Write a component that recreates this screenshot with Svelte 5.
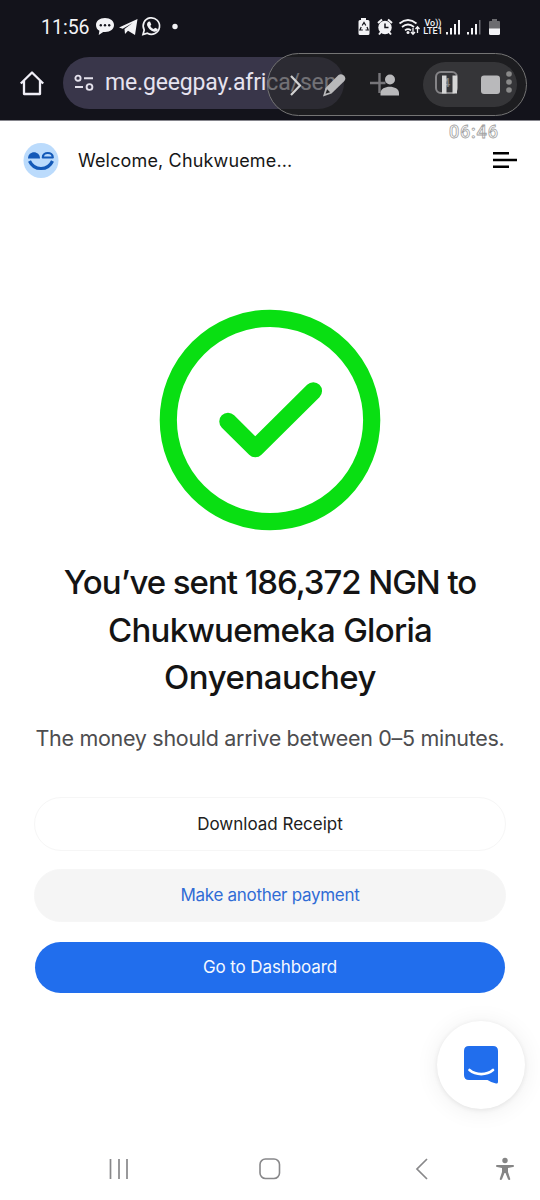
<script>
  let clock = '11:56';
  let url = 'me.geegpay.africa/sen';
  let tabs = 4;
  let recorded = '06:46';
  let userName = 'Chukwueme...';
  let titleLines = [
    { text: 'You’ve sent 186,372 NGN to', cls: 'first' },
    { text: 'Chukwuemeka Gloria', cls: 'second' },
    { text: 'Onyenauchey', cls: 'third' }
  ];
</script>

<div class="screen">
  <div class="status">
    <span class="clock">{clock}</span>
    <svg class="notifications" width="90" height="22" viewBox="0 0 90 22" fill="#f3f3f6">
      <path d="M10 2C4.500 2 1 5 1 9c0 2.600 1.200 4.500 3.400 5.800L3.700 19l4.500-3h2c5.300 0 8.800-3 8.800-7S15.500 2 10 2Z" />
      <g fill="#15151d"><circle cx="5.800" cy="9.300" r="1.200" /><circle cx="10" cy="9.300" r="1.200" /><circle cx="14.200" cy="9.300" r="1.200" /></g>
      <path d="M24 11.500 42.500 3 40 19l-7-4.200-3 3.100-.5-4.800L37.500 7l-9.800 5.800Z" />
      <path d="M48 18.500 49.200 14a8.200 8.200 0 1 1 3.200 3.200Z" fill="none" stroke="#f3f3f6" stroke-width="1.700" />
      <path d="M53.300 5.800 55 5.500l1.300 3-1 1.400c.8 1.500 1.900 2.500 3.500 3.200l1.300-1.400 2.700 1.400c-.2 2.200-1.900 3-3.800 2.600-3.500-.9-6.100-3.700-6.900-6.500-.2-1.400.2-2.500 1.200-3.400Z" />
      <circle cx="80" cy="10.500" r="2.700" />
    </svg>
    <div class="indicators">
      <svg width="70" height="24" viewBox="0 0 70 24" fill="#f3f3f6">
        <path d="M5 3h5v2h2q1.500 0 1.500 1.500v12Q13.500 20 12 20H4q-1.500 0-1.500-1.500v-12Q2.500 5 4 5h1Z" />
        <path d="m6.200 10.500 1.800-3 1.800 3M11 12l1.200 3H9.500M6.800 15H3.900l1.300-3" fill="none" stroke="#15151d" stroke-width="1.200" />
        <circle cx="29" cy="12.500" r="6.700" />
        <path d="m22 8 4-3.500M32 4.500 36 8M25 17l-2 2.500M33 17l2 2.500" stroke="#f3f3f6" stroke-width="2" />
        <path d="M29 8.500v4h3.500" fill="none" stroke="#15151d" stroke-width="1.500" />
        <g fill="none" stroke="#f3f3f6" stroke-width="1.700">
          <path d="M43.500 8.500q8.500-7 17 0M46 12q6-5 12 0M49 15.300q3-2.500 6 0" />
        </g>
        <circle cx="52" cy="17.500" r="1.500" />
        <path d="M57 13v6m-2-2 2 2.200 2-2.200M61.500 18v-6m-2 2 2-2.200 2 2.200" fill="none" stroke="#f3f3f6" stroke-width="1.300" />
      </svg>
      <span class="lte"><span>Vo))</span><span>LTE1</span></span>
      <svg width="56" height="20" viewBox="0 0 56 20" fill="#f3f3f6">
        <path d="M1 15h2v2.500H1ZM5 11h2v6.500H5ZM9 7h2v10.500H9ZM13 3h2v14.500h-2ZM22 15h2v2.500h-2ZM26 11h2v6.500h-2ZM30 7h2v10.500h-2Z" />
        <path d="M34 3h1.500v14.500H34Z" fill="#6b6b72" />
        <path d="M47 2h5v2h2q1 0 1 1v7H44V5q0-1 1-1h2Z" fill="#6c6c70" />
        <path d="M44 11.500h11v5q0 1.500-1.500 1.500h-8Q44 18 44 16.500Z" />
      </svg>
    </div>
  </div>

  <div class="browser">
    <svg class="home" width="26" height="26" viewBox="0 0 26 26" fill="none" stroke="#f0eef7" stroke-width="2.300" stroke-linejoin="round">
      <path d="m1.800 13.500 11.200-11 11.200 11M5 11v13h16V11" />
    </svg>
    <div class="url">
      <svg width="20" height="18" viewBox="0 0 20 18" fill="none" stroke="#e4e1ec" stroke-width="1.900">
        <circle cx="4" cy="4.200" r="2.600" /><path d="M10 4.200h9M1 13h8" /><circle cx="15.500" cy="13" r="2.900" />
      </svg>
      <span>{url}</span>
    </div>
    <svg class="plus" width="18" height="22" viewBox="0 0 18 22" stroke="#f0eef7" stroke-width="2.400"><path d="M1 11h15.500M10.500 1v20" /></svg>
    <span class="tabs">{tabs}</span>
    <svg class="dots" width="6" height="23" viewBox="0 0 6 23" fill="#fff"><circle cx="3" cy="3" r="2.800" /><circle cx="3" cy="11" r="2.800" /><circle cx="3" cy="19" r="2.800" /></svg>

    <div class="recorder">
      <svg class="tools" width="150" height="34" viewBox="0 0 150 34">
        <path d="m23 8 9 9.500-9 9.500" fill="none" stroke="#d3d3d3" stroke-width="2.200" />
        <path d="m55 28.500 2.500-8.500L70.500 7q2.500-2 5.300.6t.6 5.300L63.500 25.500Z" fill="#b9b9bb" />
        <path d="m57.500 25.800 1.600-4.600 3 3Z" fill="#242426" />
        <g fill="#b9b9bb"><circle cx="122" cy="11.500" r="5" /><path d="M112.500 27.500V25c0-8.500 18.500-8.500 18.500 0v2.500Z" /></g>
      </svg>
      <div class="controls">
        <svg width="94" height="44" viewBox="0 0 94 44">
          <path d="M19 13.500h4.500v18H19ZM29.500 13.500H34v18h-4.500Z" fill="#d6d6d6" />
          <rect x="58" y="13.500" width="19" height="18.500" rx="3" fill="#b9b9bb" />
        </svg>
      </div>
    </div>
    <span class="timer">{recorded}</span>
  </div>

  <header>
    <svg width="36" height="36" viewBox="0 0 36 36">
      <circle cx="18" cy="17.500" r="17.500" fill="#bbdbfc" />
      <path d="M5 15.500C5 7 17 7 17 15.500Z" fill="#1359b8" />
      <path d="M19.800 14.500c0-6 10-6 10 0Z" fill="none" stroke="#1359b8" stroke-width="2.200" stroke-linejoin="round" />
      <path d="M6.500 18c4.500 10 18.500 10 23 0" fill="none" stroke="#1359b8" stroke-width="3.200" />
    </svg>
    <span class="welcome">Welcome, {userName}</span>
    <svg class="menu" width="24" height="18" viewBox="0 0 24 18" stroke="#000" stroke-width="2.500"><path d="M0 2.300h16M0 9h24M0 15.700h16" /></svg>
  </header>

  <main>
    <svg class="check" width="222" height="222" viewBox="0 0 222 222" fill="none" stroke="#09df12">
      <circle cx="111" cy="111" r="101.700" stroke-width="17.200" />
      <path d="m69 112.500 27.300 27L154.300 82" stroke-width="17.500" stroke-linecap="round" stroke-linejoin="round" />
    </svg>
    <h1>
      {#each titleLines as line}
        <span class={line.cls}>{line.text}</span>
      {/each}
    </h1>
    <p>The money should arrive between 0–5 minutes.</p>
    <div class="actions">
      <button class="receipt">Download Receipt</button>
      <button class="another">Make another payment</button>
      <button class="dashboard">Go to Dashboard</button>
    </div>
  </main>

  <button class="chat" aria-label="Chat">
    <svg width="36" height="40" viewBox="0 0 36 40">
      <path d="M6 1h24q5 0 5 5v31q0 1.800-2 1.500-4-.5-8.500-3.500H6q-5 0-5-5V6q0-5 5-5Z" fill="#216eed" />
      <path d="M6.500 25c6.500 5.400 17 5.400 23.500 0" fill="none" stroke="#fff" stroke-width="2.700" stroke-linecap="round" />
    </svg>
  </button>

  <nav>
    <svg width="20" height="22" viewBox="0 0 20 22" stroke="#88888a" stroke-width="1.700"><path d="M1.500 1v20M10 1v20M18 1v20" /></svg>
    <svg class="home-key" width="22" height="22" viewBox="0 0 22 22" fill="none" stroke="#88888a" stroke-width="1.600"><rect x="1" y="1" width="19.500" height="19.500" rx="5.500" /></svg>
    <svg class="back-key" width="14" height="22" viewBox="0 0 14 22" fill="none" stroke="#88888a" stroke-width="1.700"><path d="M12 1 2 11l10 10" /></svg>
    <svg class="access-key" width="20" height="24" viewBox="0 0 20 24" fill="#858585"><circle cx="10" cy="3.500" r="2.700" /><path d="M2 8h16q1 0 1 1t-1 1l-5 1v4l2.300 7q0 1-1 1t-1.300-.8L10.500 16h-1L7 22.200q-.4.800-1.300.8t-1-1L7 15v-4l-5-1q-1 0-1-1t1-1Z" /></svg>
  </nav>
</div>

<style>
  :global(body) {
    background: #fff;
  }
  .screen {
    position: relative;
    width: 540px;
    height: 1200px;
    overflow: hidden;
    background: #fff;
    display: flex;
    flex-direction: column;
    font-family: Inter, "Liberation Sans", sans-serif;
  }
  svg {
    display: block;
    flex: none;
  }
  .status {
    box-sizing: border-box;
    height: 54px;
    background: #13131b;
    color: #f3f3f6;
    display: flex;
    align-items: center;
    padding: 0 39px 0 41px;
  }
  .clock {
    width: 54px;
    font-family: Roboto, sans-serif;
    font-size: 19.5px;
    white-space: nowrap;
  }
  .indicators {
    margin-left: auto;
    display: flex;
    align-items: center;
  }
  .lte {
    width: 20px;
    margin: 0 2px 0 -3px;
    display: flex;
    flex-direction: column;
    align-items: center;
    font: 500 9px/8px Roboto, sans-serif;
  }
  .browser {
    position: relative;
    box-sizing: border-box;
    height: 67px;
    background: #13131b;
    border-bottom: 1px solid #85858c;
    display: flex;
    align-items: center;
    padding: 0 0 9px 19px;
  }
  .url {
    box-sizing: border-box;
    width: 281px;
    height: 52px;
    margin-left: 18px;
    padding-left: 11px;
    border-radius: 26px;
    background: #39364a;
    color: #e6e3ef;
    display: flex;
    align-items: center;
    gap: 11px;
    font-family: Roboto, sans-serif;
    font-size: 23px;
    letter-spacing: -0.15px;
    white-space: nowrap;
  }
  .plus {
    margin-left: 25px;
  }
  .tabs {
    box-sizing: border-box;
    width: 23px;
    height: 23px;
    margin-left: 48px;
    border: 2px solid #f0eef7;
    border-radius: 6px;
    color: #f0eef7;
    font: 500 13px/19px Roboto, sans-serif;
    text-align: center;
  }
  .dots {
    margin-left: 48px;
  }
  .recorder {
    position: absolute;
    left: 267px;
    top: -1px;
    box-sizing: border-box;
    width: 260px;
    height: 63px;
    border: 1.5px solid #747474;
    border-radius: 32px;
    background: rgba(36, 36, 36, 0.6);
    display: flex;
    align-items: center;
  }
  .controls {
    width: 94px;
    height: 45px;
    margin-left: 5px;
    border-radius: 23px;
    background: rgba(255, 255, 255, 0.11);
  }
  .timer {
    position: absolute;
    left: 449px;
    top: 67px;
    color: #fff;
    -webkit-text-stroke: 0.8px #a2a2a2;
    font: 500 18px/21px Roboto, sans-serif;
    letter-spacing: 0.8px;
  }
  header {
    height: 79px;
    display: flex;
    align-items: center;
    padding: 0 23px;
  }
  .welcome {
    margin-left: 19px;
    font-size: 18px;
    letter-spacing: 0.15px;
    color: #161616;
  }
  .menu {
    margin-left: auto;
    margin-top: -1px;
  }
  main {
    display: flex;
    flex-direction: column;
    align-items: center;
    padding-top: 109px;
  }
  h1 {
    margin: 28px 0 0;
    display: flex;
    flex-direction: column;
    align-items: center;
    color: #141414;
    font-size: 33px;
    line-height: 47.5px;
    font-weight: 500;
    white-space: nowrap;
  }
  .first {
    letter-spacing: -1.05px;
  }
  .second {
    letter-spacing: -0.7px;
  }
  .third {
    letter-spacing: -0.5px;
  }
  p {
    margin: 19px 0 0;
    color: #4d4d4f;
    font-size: 21.5px;
    line-height: 34px;
    letter-spacing: -0.3px;
    white-space: nowrap;
  }
  .actions {
    width: 472px;
    margin-top: 42px;
    display: flex;
    flex-direction: column;
    align-items: center;
    gap: 18px;
  }
  .actions button {
    box-sizing: border-box;
    width: 472px;
    height: 54px;
    padding: 0;
    border: 1px solid #f6f6f6;
    border-radius: 27px;
    font-family: inherit;
    font-size: 17px;
  }
  .receipt {
    background: #fff;
    color: #202020;
  }
  .actions .another {
    height: 53px;
    background: #f5f5f5;
    color: #306cd5;
    letter-spacing: -0.3px;
  }
  .actions .dashboard {
    width: 470px;
    height: 51px;
    margin-top: 2px;
    border: none;
    background: #216eed;
    color: #f4f8ff;
    letter-spacing: -0.1px;
  }
  .chat {
    position: absolute;
    left: 437px;
    top: 1021px;
    width: 88px;
    height: 88px;
    padding: 0;
    border: none;
    border-radius: 50%;
    background: #fff;
    box-shadow: 0 1px 5px rgba(0, 0, 0, 0.08), 0 2px 24px rgba(0, 0, 0, 0.07);
    display: flex;
    align-items: center;
    justify-content: center;
  }
  nav {
    margin-top: auto;
    height: 63px;
    display: flex;
    align-items: center;
    padding-left: 109px;
  }
  .home-key {
    margin-left: 130px;
  }
  .back-key {
    margin-left: 134px;
  }
  .access-key {
    margin-left: 66px;
  }
</style>
